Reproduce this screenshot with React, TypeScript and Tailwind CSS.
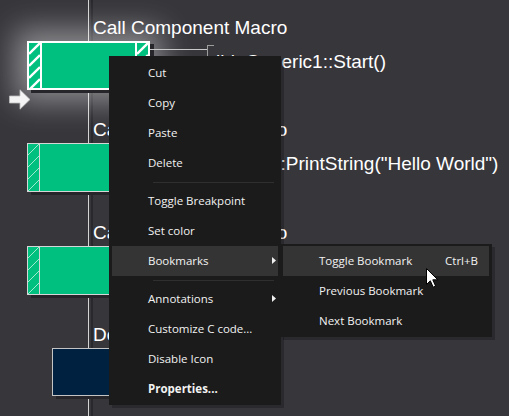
import React from 'react';

type FlowRowData = {
  title: string;
  kind: 'macro' | 'delay';
  height: string;
  selected?: boolean;
  call?: string;
};

const rows: FlowRowData[] = [
  { title: 'Call Component Macro', kind: 'macro', height: 'h-[102px]', selected: true, call: 'lbl_Generic1::Start()' },
  { title: 'Call Component Macro', kind: 'macro', height: 'h-[103px]', call: 'Logger::PrintString("Hello World")' },
  { title: 'Call Component Macro', kind: 'macro', height: 'h-[102px]', call: 'lbl_Generic1::Stop()' },
  { title: 'Delay', kind: 'delay', height: 'h-[109px]' },
];

type MenuEntry = { label: string; bold?: boolean; sub?: boolean; active?: boolean } | 'sep';

const menuEntries: MenuEntry[] = [
  { label: 'Cut' },
  { label: 'Copy' },
  { label: 'Paste' },
  { label: 'Delete' },
  'sep',
  { label: 'Toggle Breakpoint' },
  { label: 'Set color' },
  { label: 'Bookmarks', sub: true, active: true },
  'sep',
  { label: 'Annotations', sub: true },
  { label: 'Customize C code...' },
  { label: 'Disable Icon' },
  { label: 'Properties...', bold: true },
];

const bookmarkEntries = [
  { label: 'Toggle Bookmark', shortcut: 'Ctrl+B', active: true },
  { label: 'Previous Bookmark' },
  { label: 'Next Bookmark' },
];

// diagonal stripes at both ends of a macro block
function Hatch({ bold }: { bold?: boolean }) {
  return (
    <svg width="11" height="47" className="block shrink-0">
      {[0, 1, 2, 3, 4].map((i) => (
        <line
          key={i}
          x1="0"
          y1={12 * i + 11}
          x2="11"
          y2={12 * i}
          stroke={bold ? '#ffffff' : 'rgba(225,255,240,0.7)'}
          strokeWidth={bold ? 2.4 : 1}
        />
      ))}
    </svg>
  );
}

function MacroBlock({ selected }: { selected?: boolean }) {
  const edge = selected ? 'border-white border-2' : 'border-[#d6d6d6] border';
  const divider = selected ? 'w-[2px] bg-white' : 'w-px bg-[#d6d6d6]';
  return (
    <div
      className={`ml-[27px] flex h-[49px] w-[123px] shrink-0 items-stretch overflow-hidden bg-[#00c07f] ${edge} ${
        selected
          ? 'shadow-[4px_3px_0_#26252a,0_0_30px_12px_rgba(255,255,255,0.42)]'
          : 'shadow-[4px_3px_0_#26252a]'
      }`}
    >
      <Hatch bold={selected} />
      <div className={`shrink-0 ${divider}`} />
      <div className="flex-1" />
      <div className={`shrink-0 ${divider}`} />
      <Hatch bold={selected} />
    </div>
  );
}

function DelayBlock() {
  return (
    <div className="ml-[52px] h-[48px] w-[72px] shrink-0 border border-[#c4c4c4] bg-[#00213f] shadow-[4px_3px_0_#26252a]" />
  );
}

function CallLine({ text }: { text: string }) {
  return (
    <div className="flex items-start">
      <div className="mt-[8px] h-px w-[57px] bg-[#c8c8c8]" />
      <div className="mt-[4px] h-[40px] w-[7px] border-y border-l border-[#9c9c9c]" />
      <div className="ml-[2px] mt-[10px] whitespace-nowrap text-[19px] leading-[22px] text-white">{text}</div>
    </div>
  );
}

function EntryArrow() {
  return (
    <svg width="22" height="21" viewBox="0 0 22 21" className="absolute left-[9px] top-[89px]">
      <path d="M0.5 7 H11 V0.8 L21 10.5 L11 20.2 V14 H0.5 Z" fill="#f4f4f4" stroke="#bdbdbd" strokeWidth="0.8" />
    </svg>
  );
}

function FlowRow({ row }: { row: FlowRowData }) {
  return (
    <div className={`relative shrink-0 ${row.height}`}>
      <div className="relative h-[41px] whitespace-nowrap pl-[93px] pt-[17px] text-[19px] leading-[22px] text-white">
        {row.title}
      </div>
      <div className="flex items-start">
        {row.kind === 'delay' ? <DelayBlock /> : <MacroBlock selected={row.selected} />}
        {row.call && <CallLine text={row.call} />}
      </div>
      {row.selected && <EntryArrow />}
    </div>
  );
}

function SubArrow() {
  return (
    <svg width="4" height="7" className="absolute right-[2px] top-[11px]">
      <path d="M0 0 L4 3.5 L0 7 Z" fill="#f0f0f0" />
    </svg>
  );
}

function ContextMenu() {
  return (
    <div className="absolute left-[109px] top-[56px] w-[172px] bg-[#1b1b1b] px-[3px] pb-px pt-[2px] font-['Open_Sans',sans-serif] text-[11.5px] text-[#f2f2f2] shadow-[3px_3px_0_rgba(0,0,0,0.22)]">
      {menuEntries.map((entry, i) =>
        entry === 'sep' ? (
          <div key={i} className="flex h-[8px] items-center pl-[41px] pr-[4px]">
            <div className="h-px w-full bg-[#2f2f2f]" />
          </div>
        ) : (
          <div
            key={i}
            className={`relative flex h-[30px] items-center pl-[36px] ${entry.active ? 'bg-[#343434]' : ''} ${
              entry.bold ? 'font-bold' : ''
            }`}
          >
            {entry.label}
            {entry.sub && <SubArrow />}
          </div>
        )
      )}
    </div>
  );
}

function BookmarksMenu() {
  return (
    <div className="absolute left-[280px] top-[244px] w-[212px] bg-[#1b1b1b] px-[3px] pb-px pt-[2px] font-['Open_Sans',sans-serif] text-[11.5px] text-[#f2f2f2] shadow-[3px_3px_0_rgba(0,0,0,0.22)]">
      {bookmarkEntries.map((entry) => (
        <div
          key={entry.label}
          className={`flex h-[30px] items-center justify-between pl-[36px] pr-[11px] ${entry.active ? 'bg-[#343434]' : ''}`}
        >
          <span>{entry.label}</span>
          {entry.shortcut && <span>{entry.shortcut}</span>}
        </div>
      ))}
    </div>
  );
}

function Pointer() {
  return (
    <svg width="13" height="21" viewBox="0 0 13 21" className="absolute left-[426px] top-[268px]">
      <path d="M0.5 0.5 V16.5 L4.3 12.8 L7.2 19.2 L9.6 18.1 L6.8 11.8 L11.8 11.8 Z" fill="#ffffff" stroke="#000000" strokeWidth="1" strokeLinejoin="round" />
    </svg>
  );
}

export default function App() {
  return (
    <div className="relative h-[416px] w-[509px] overflow-hidden bg-[#37363b] font-['Liberation_Sans',Arial,sans-serif]">
      {/* program spine */}
      <div className="absolute inset-y-0 left-[88px] w-px bg-[#d4d4d4]" />
      <div className="absolute inset-y-0 left-[91px] w-[2px] bg-[#29282d]" />
      <div className="relative flex flex-col">
        {rows.map((row, i) => (
          <FlowRow key={i} row={row} />
        ))}
      </div>
      <ContextMenu />
      <BookmarksMenu />
      <Pointer />
    </div>
  );
}
